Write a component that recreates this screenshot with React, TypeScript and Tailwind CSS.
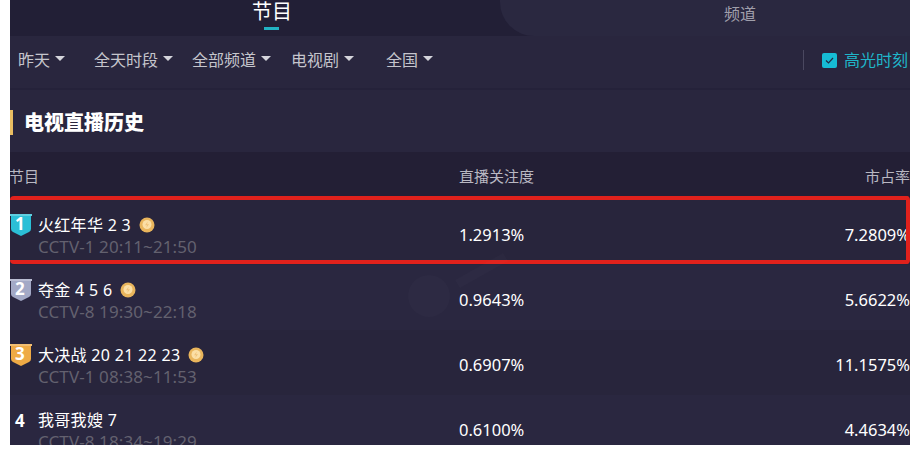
const sans = "font-['Noto_Sans','Noto_Sans_CJK_SC',sans-serif]";

const filters = [
  { label: "昨天", width: "w-[76px]" },
  { label: "全天时段", width: "w-[98px]" },
  { label: "全部频道", width: "w-[99px]" },
  { label: "电视剧", width: "w-[95px]" },
  { label: "全国", width: "w-[60px]" },
];

const rows = [
  { rank: 1, color: "#2bbfd6", name: "火红年华 2 3", coin: true, info: "CCTV-1 20:11~21:50", attention: "1.2913%", share: "7.2809%", bg: "bg-[#28253c]" },
  { rank: 2, color: "#a3a9c6", name: "夺金 4 5 6", coin: true, info: "CCTV-8 19:30~22:18", attention: "0.9643%", share: "5.6622%", bg: "bg-[#2a2740]" },
  { rank: 3, color: "#eeaa45", name: "大决战 20 21 22 23", coin: true, info: "CCTV-1 08:38~11:53", attention: "0.6907%", share: "11.1575%", bg: "bg-[#28253c]" },
  { rank: 4, color: "", name: "我哥我嫂 7", coin: false, info: "CCTV-8 18:34~19:29", attention: "0.6100%", share: "4.4634%", bg: "bg-[#2a2740]" },
];

function Caret() {
  return <span className="ml-[5px] mb-[3px] inline-block h-0 w-0 border-x-[5px] border-t-[5px] border-x-transparent border-t-[#d5d5dc]" />;
}

function RankBadge({ rank, color }: { rank: number; color: string }) {
  if (!color) {
    return <div className="mt-px w-[22px] pl-[5px] text-[17px] font-bold leading-[20px] text-white">{rank}</div>;
  }
  return (
    <div className="relative -mt-px h-[23px] w-[22px]">
      <svg width="22" height="23" viewBox="0 0 22 23">
        <path d="M0 0H22V2H21V15Q21 17 19 18L11 22L3 18Q1 17 1 15V2H0Z" fill={color} />
        <path d="M0 0H22V2H0Z" fill="#ffffff" fillOpacity="0.25" />
      </svg>
      <span className="absolute left-[5px] top-[-1px] text-[17px] font-bold leading-[22px] text-white">{rank}</span>
    </div>
  );
}

function Coin() {
  return (
    <svg className="ml-[8px]" width="16" height="16" viewBox="0 0 16 16">
      <circle cx="8" cy="8" r="7.5" fill="#e9b55c" />
      <circle cx="8" cy="7.5" r="4.5" fill="#fbdfa6" />
      <path d="M8.8 4.5 6 8.3H8L7.2 11 10 7.2H8Z" fill="#efc27a" />
    </svg>
  );
}

export default function App() {
  return (
    <div className={`h-[465px] w-[920px] overflow-hidden bg-white ${sans}`}>
      <div className="relative ml-[10px] h-[445px] w-[900px] overflow-hidden bg-[#29263e]">
        <div className="flex h-[36px] bg-[#221f36]">
          <div className="relative w-[490px] pl-[242px]">
            <span className="text-[20px] leading-[24px] text-white">节目</span>
            <div className="absolute left-[254px] top-[27px] h-[3px] w-[15px] bg-[#22b2c3]" />
          </div>
          <div className="flex-1 rounded-bl-[34px] bg-[#2a2840] pl-[224px] pt-[2px] text-[16px] leading-[24px] text-[#a09fab]">
            频道
          </div>
        </div>

        <div className="flex h-[52px] items-center bg-[#29263e] pb-[4px] pl-[8px] text-[16px] text-[#c5c5cc]">
          {filters.map((f) => (
            <div key={f.label} className={`flex items-center ${f.width}`}>
              {f.label}
              <Caret />
            </div>
          ))}
          <div className="ml-[357px] h-[20px] w-px bg-[#4a4860]" />
          <div className="ml-[18px] flex h-[15px] w-[15px] items-center justify-center rounded-[2px] bg-[#16bcd4]">
            <svg width="9" height="7" viewBox="0 0 9 7">
              <path d="M1 3.5 3.5 6 8 1" fill="none" stroke="#1f2a44" strokeWidth="1.2" />
            </svg>
          </div>
          <span className="ml-[7px] whitespace-nowrap text-[#1fb5c9]">高光时刻</span>
        </div>

        <div className="flex h-[64px] items-center border-t-2 border-[#25223a] bg-[#29263e] pt-[3px]">
          <div className="h-[25px] w-[3px] bg-[#e9bd62]" />
          <h2 className="ml-[11px] text-[20px] font-black leading-[24px] text-white">电视直播历史</h2>
        </div>

        <div className="flex h-[48px] items-center justify-between bg-[#231f35] pt-[1px] text-[15px] text-[#b9b8c2]">
          <div className="-ml-px flex">
            <span className="w-[450px]">节目</span>
            <span>直播关注度</span>
          </div>
          <span>市占率</span>
        </div>

        {rows.map((r) => (
          <div key={r.rank} className={`flex h-[65px] items-start pt-[15px] ${r.bg}`}>
            <RankBadge rank={r.rank} color={r.color} />
            <div className="ml-[6px] w-[421px]">
              <div className="flex items-center text-[16px] leading-[20px] tracking-[0.3px] text-white">
                {r.name}
                {r.coin && <Coin />}
              </div>
              <div className="mt-[2px] whitespace-nowrap text-[17px] leading-[20px] tracking-[0.1px] text-[#63616f]">{r.info}</div>
            </div>
            <div className="mt-[10px] text-[16.5px] leading-[20px] text-white">{r.attention}</div>
            <div className="mt-[10px] flex-1 text-right text-[16.5px] leading-[20px] text-white">{r.share}</div>
          </div>
        ))}

        {/* red annotation drawn over the first row */}
        <div className="absolute left-0 top-[196px] h-[68px] w-[900px] rounded-[4px] border-y-[4px] border-r-[4px] border-[#e0211c]" />

        {/* faint watermark */}
        <svg className="absolute left-[395px] top-[245px]" width="110" height="75" viewBox="0 0 110 75">
          <g fill="#ffffff" fillOpacity="0.015">
            <circle cx="24" cy="51" r="21" />
            <path d="M50 35 98 8l5 8-48 27Z" />
          </g>
        </svg>
      </div>
    </div>
  );
}
